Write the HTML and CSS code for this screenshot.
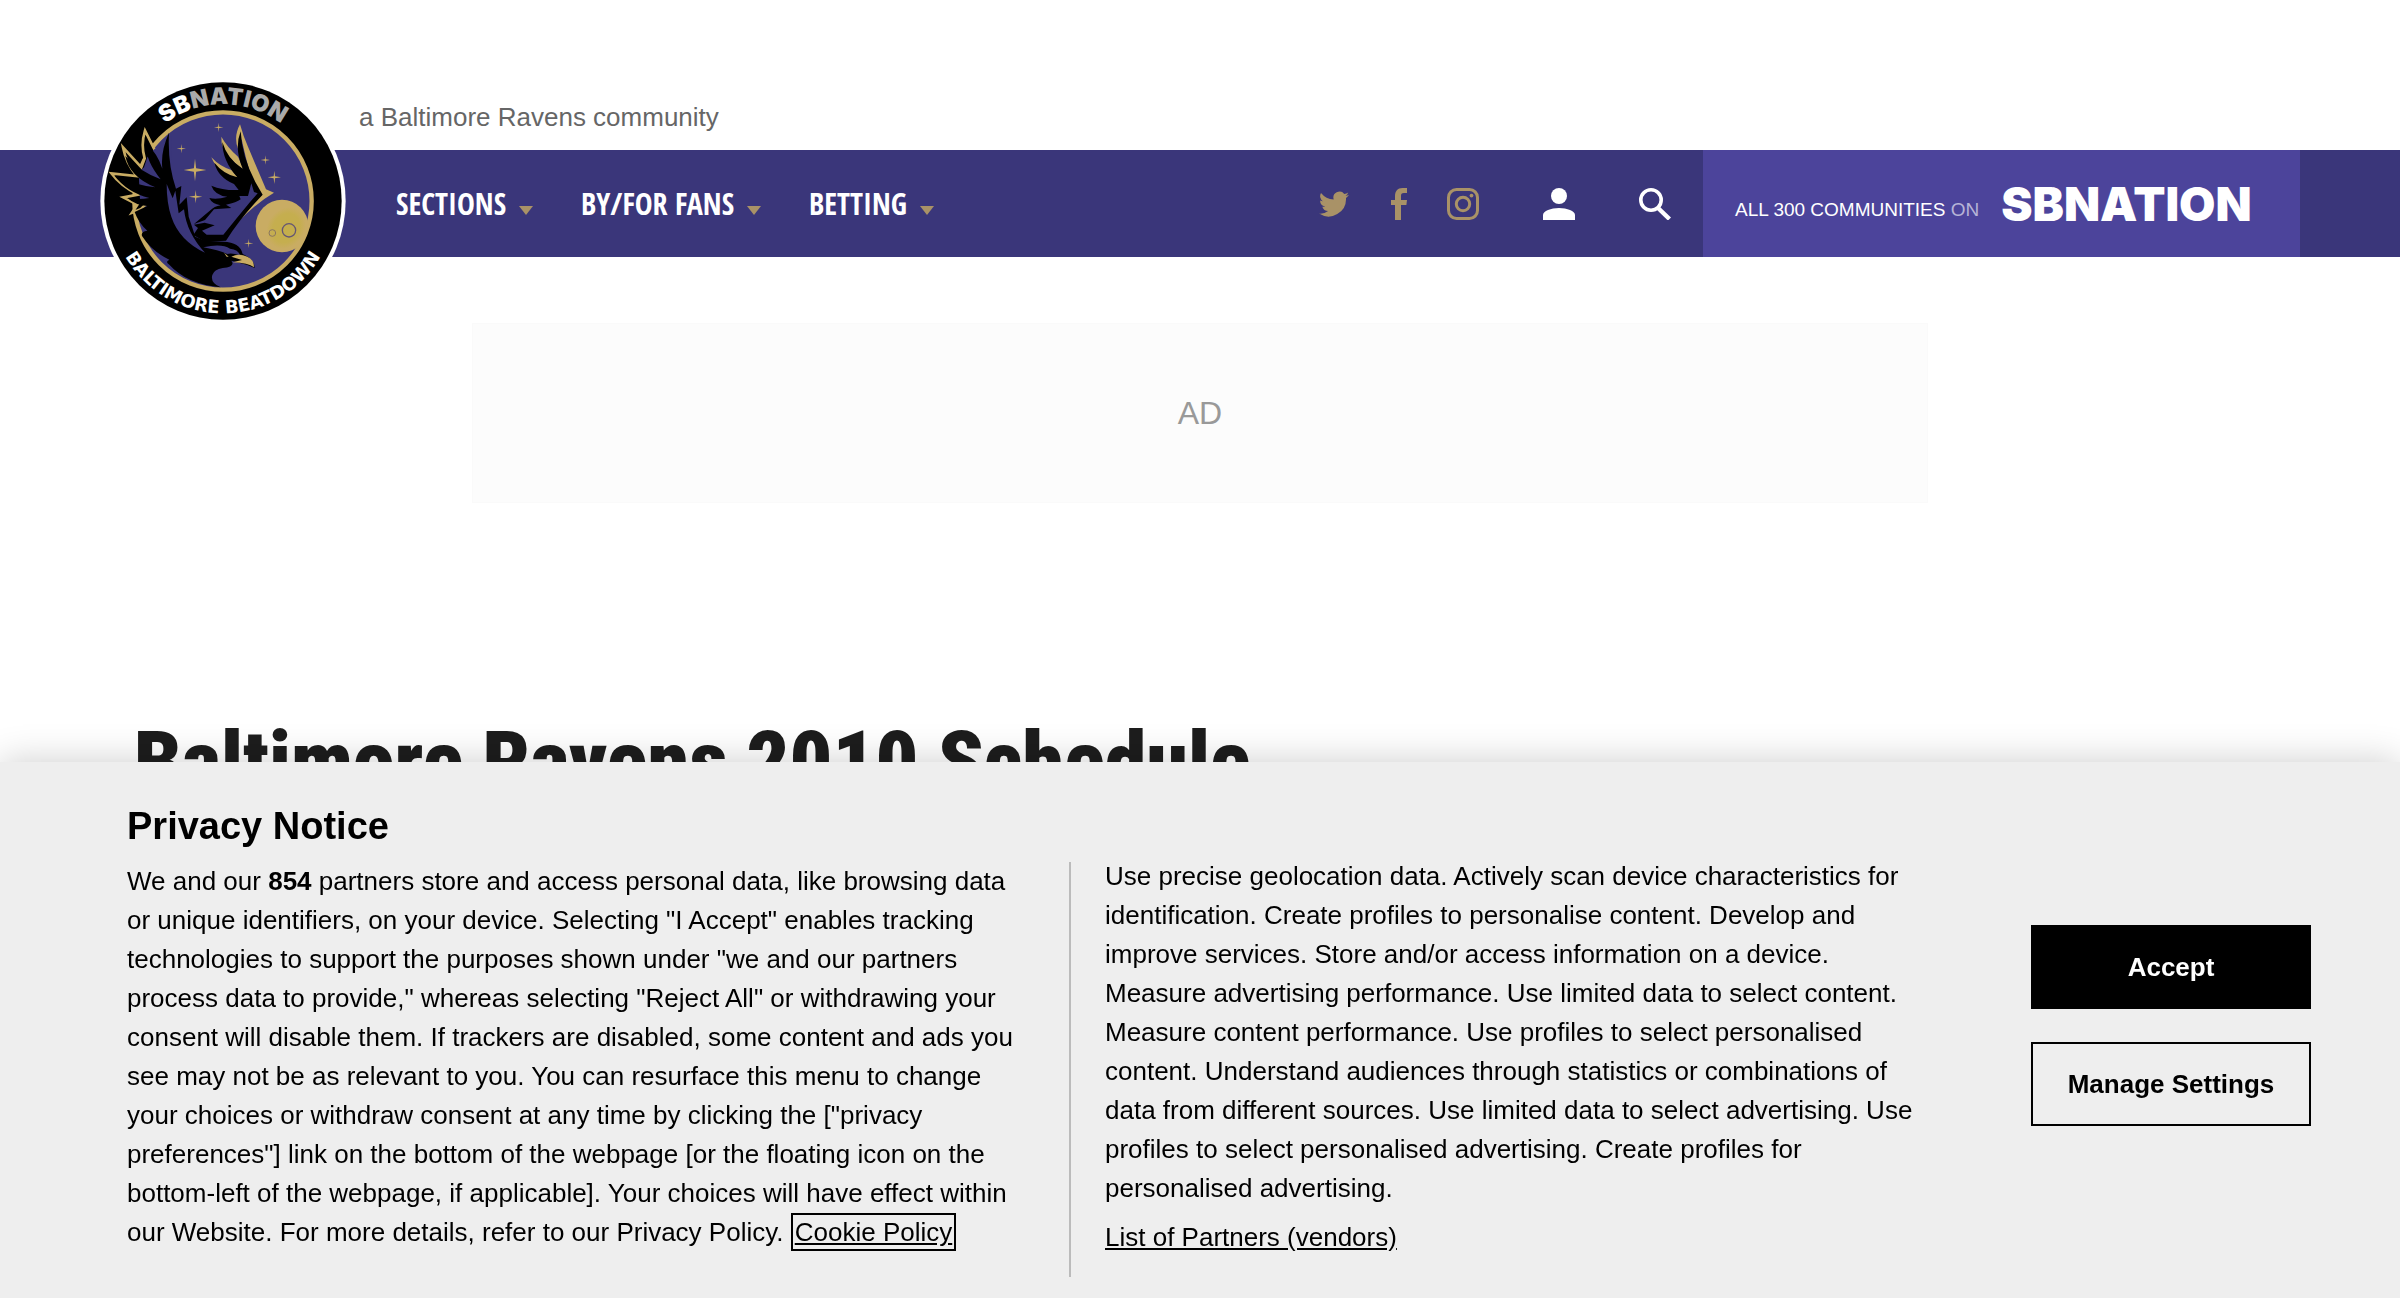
FILE: index.html
```html
<!DOCTYPE html>
<html lang="en">
<head>
<meta charset="utf-8">
<meta name="viewport" content="width=device-width, initial-scale=1">
<title>Baltimore Ravens 2010 Schedule - Baltimore Beatdown</title>
<link rel="stylesheet" href="styles.css">
</head>
<body>
<header class="header">
  <p class="tagline">a Baltimore Ravens community</p>
  <div class="bar">
    <a class="logo" href="#" aria-label="Baltimore Beatdown">
      <svg viewBox="30 24 738 738" aria-hidden="true">
        <defs>
          <path id="arc-top" d="M109 393a290 290 0 0 1 580 0"/>
          <path id="arc-bottom" d="M62 393a337 337 0 0 0 674 0"/>
          <path id="star" d="M0-20L2-3L20 0L2 3L0 20L-2 3L-20 0L-2-3Z"/>
          <radialGradient id="glow"><stop offset="0" stop-color="#c5ae4b"/><stop offset=".7" stop-color="#c5ae4f"/><stop offset="1" stop-color="#c9ac63"/></radialGradient>
        </defs>
        <circle cx="399" cy="393" r="368" fill="#fff"/>
        <circle cx="399" cy="393" r="356"/>
        <circle cx="399" cy="393" r="266" fill="#3a367a" stroke="#c9ac63" stroke-width="13"/>
        <!-- back of the raised wing, with its gold edge -->
        <path d="M192 236L165 182Q152 225 164 265L154 292L99 232Q108 280 140 318L64 310Q92 348 144 374L100 382L142 404L126 428L152 418L240 330Z" stroke="#c9ac63" stroke-width="8" stroke-linejoin="miter"/>
        <path d="M190 240L172 262L162 292L146 308L150 390L240 380L245 200Z" fill="#3a367a"/>
        <!-- raised wing, body and tail -->
        <path d="M237 188Q211 245 217 296Q202 250 168 220Q165 270 212 328Q150 305 106 258Q118 320 196 352Q130 345 72 316Q112 368 178 384Q145 390 112 384Q136 405 172 408L134 426Q146 460 172 482Q152 484 156 498Q186 545 238 569Q224 576 238 584Q290 642 392 652Q360 638 367 615Q372 598 398 594Q438 590 424 572L470 584L494 594Q494 568 458 552Q450 516 400 515L345 512L316 500L296 440L290 382L268 404L274 348L258 356Q232 280 237 188Z"/>
        <path d="M230 342L248 385L256 362L266 430L282 418Q290 490 345 548Q268 512 244 440Q230 400 230 342Z" fill="#3a367a"/>
        <path d="M340 532Q395 520 420 536Q445 538 450 556Q425 548 412 552Q385 540 340 532Z" fill="#3a367a"/>
        <!-- far wing: gold edge, then feathers -->
        <path d="M450 163Q460 200 474 230L528 358L552 368Q500 398 446 454Q468 412 516 375L492 345Q475 300 455 208Q447 218 444 236Q430 200 450 163Z" fill="#c9ac63"/>
        <path d="M394 200Q412 232 444 260L462 300Q425 275 400 236Q393 220 394 200Z" fill="#c9ac63"/>
        <path d="M364 262Q390 290 424 300L450 328Q415 318 390 300Q375 288 364 262Z" fill="#c9ac63"/>
        <path d="M452 184Q432 235 458 296Q412 268 397 216Q397 272 442 322Q400 312 373 278Q384 322 432 342L446 360Q400 362 364 347Q374 376 412 380Q380 390 358 384Q366 402 392 406Q372 410 362 420L312 462L345 450L372 418L424 414L408 404Q440 398 452 388L448 378L474 378L484 340L492 366L503 370L482 394Q440 445 400 494L350 494L336 482L374 466L344 458L312 464L324 474L310 495L345 515L408 512Q450 445 518 374L496 336Q456 260 452 184Z"/>
        <!-- beak and eye -->
        <path d="M424 560Q446 548 472 560Q492 568 492 592Q475 578 428 577L456 570Z" fill="#c9ac63"/>
        <path d="M402 548L416 560L410 560Z" fill="#c9ac63"/>
        <!-- moon -->
        <circle cx="576" cy="468" r="79" fill="#c9ac63"/>
        <ellipse cx="588" cy="474" rx="55" ry="66" transform="rotate(35 588 474)" fill="url(#glow)"/>
        <circle cx="597" cy="481" r="20" fill="none" stroke="#655674" stroke-width="4"/>
        <circle cx="547" cy="489" r="10" fill="none" stroke="#8a7660" stroke-width="3"/>
        <g fill="#c9ac63">
          <use href="#star" transform="translate(386 172) scale(.7)"/>
          <use href="#star" transform="translate(274 236) scale(.7)"/>
          <use href="#star" transform="translate(315 300) scale(1.7)"/>
          <use href="#star" transform="translate(317 380)"/>
          <use href="#star" transform="translate(526 270) scale(.7)"/>
          <use href="#star" transform="translate(553 322)"/>
          <use href="#star" transform="translate(476 520) scale(.7)"/>
        </g>
        <text class="logo-top"><textPath href="#arc-top" startOffset="50%">SB<tspan class="logo-gray">NATION</tspan></textPath></text>
        <text class="logo-bottom"><textPath href="#arc-bottom" startOffset="50%">BALTIMORE BEATDOWN</textPath></text>
      </svg>
    </a>
    <nav class="nav">
      <a class="nav-link" href="#">SECTIONS<span class="caret"></span></a>
      <a class="nav-link" href="#">BY/FOR FANS<span class="caret"></span></a>
      <a class="nav-link" href="#">BETTING<span class="caret"></span></a>
    </nav>
    <div class="tools">
      <div class="social">
        <a class="icon" href="#" aria-label="Twitter"><svg viewBox="0 0 32 32"><path d="M31 5.800a12 12 0 0 1-3.500 1 6.200 6.200 0 0 0 2.700-3.400 12 12 0 0 1-3.900 1.500 6.100 6.100 0 0 0-10.600 5.600A17.500 17.500 0 0 1 3 4a6.200 6.200 0 0 0 1.900 8.300 6 6 0 0 1-2.800-.8 6.200 6.200 0 0 0 5 6.100 6 6 0 0 1-2.800.1 6.200 6.200 0 0 0 5.800 4.300A12.400 12.400 0 0 1 1 24.600a17.500 17.500 0 0 0 27-15.600A12 12 0 0 0 31 5.800z" transform="translate(-1 1)"/></svg></a>
        <a class="icon" href="#" aria-label="Facebook"><svg viewBox="0 0 32 32"><path d="M12 32V17H8v-5h4V8.500C12 3 14.500 0 19.500 0H24v5h-3c-2.500 0-3 1-3 3v4h6l-.6 5H18v15z"/></svg></a>
        <a class="icon" href="#" aria-label="Instagram"><svg viewBox="0 0 32 32"><rect x="1.500" y="1.500" width="29" height="29" rx="8" fill="none" stroke="currentColor" stroke-width="3"/><circle cx="16" cy="16" r="6.700" fill="none" stroke="currentColor" stroke-width="3"/><circle cx="24.500" cy="7.600" r="1.900"/></svg></a>
      </div>
      <button class="icon" type="button" aria-label="Log in"><svg viewBox="0 0 32 32"><circle cx="16" cy="8" r="8"/><path d="M0 32v-5c0-4 8-7 16-7s16 3 16 7v5z"/></svg></button>
      <button class="icon" type="button" aria-label="Search"><svg viewBox="0 0 32 32"><circle cx="12" cy="12" r="10.200" fill="none" stroke="currentColor" stroke-width="3.600"/><path d="M18.500 19.500L30.500 31" stroke="currentColor" stroke-width="4.400"/></svg></button>
      <a class="network" href="#">
        <span>ALL 300 COMMUNITIES <span class="dim">ON</span></span>
        <strong class="wordmark">SBNATION</strong>
      </a>
    </div>
  </div>
</header>
<main class="main">
  <div class="ad">AD</div>
  <h1 class="title">Baltimore Ravens 2010 Schedule</h1>
</main>
<section class="notice" aria-labelledby="notice-title">
  <div class="copy">
    <h2 class="notice-title" id="notice-title">Privacy Notice</h2>
    <p class="text">We and our <b>854</b> partners store and access personal data, like browsing data or unique identifiers, on your device. Selecting "I Accept" enables tracking technologies to support the purposes shown under "we and our partners process data to provide," whereas selecting "Reject All" or withdrawing your consent will disable them. If trackers are disabled, some content and ads you see may not be as relevant to you. You can resurface this menu to change your choices or withdraw consent at any time by clicking the ["privacy preferences"] link on the bottom of the webpage [or the floating icon on the bottom-left of the webpage, if applicable]. Your choices will have effect within our Website. For more details, refer to our Privacy Policy. <a class="policy" href="#">Cookie Policy</a></p>
  </div>
  <div class="purposes">
    <p class="text">Use precise geolocation data. Actively scan device characteristics for identification. Create profiles to personalise content. Develop and improve services. Store and/or access information on a device. Measure advertising performance. Use limited data to select content. Measure content performance. Use profiles to select personalised content. Understand audiences through statistics or combinations of data from different sources. Use limited data to select advertising. Use profiles to select personalised advertising. Create profiles for personalised advertising.</p>
    <a class="vendors" href="#">List of Partners (vendors)</a>
  </div>
  <div class="actions">
    <button class="btn btn-solid" type="button">Accept</button>
    <button class="btn" type="button">Manage Settings</button>
  </div>
</section>
</body>
</html>
```

FILE: styles.css
```css
* {
  box-sizing: border-box;
}

body {
  margin: 0;
  background: #fff;
  color: #000;
  font-family: "Liberation Sans", Arial, sans-serif;
  font-size: 26px;
  line-height: 39px;
}

h1, h2, p {
  margin: 0;
}

a {
  color: inherit;
}

.tagline {
  padding: 98px 100px 13px 359px;
  color: #666;
}

.bar {
  position: relative;
  display: flex;
  justify-content: space-between;
  height: 107px;
  padding: 0 100px 0 396px;
  background: #3a367a;
  color: #fff;
}

.logo {
  position: absolute;
  left: 100px;
  top: -72px;
  width: 246px;
  height: 246px;
}

.logo svg {
  display: block;
  width: 100%;
  height: 100%;
}

.logo-top {
  fill: #fff;
  font: 900 70px Inter, sans-serif;
  text-anchor: middle;
}

.logo-gray {
  fill: #aaa;
}

.logo-bottom {
  fill: #fff;
  font: 700 54px "DejaVu Sans", sans-serif;
  text-anchor: middle;
}

.nav {
  display: flex;
  align-items: center;
  gap: 48px;
}

.nav-link {
  display: flex;
  align-items: center;
  gap: 13px;
  font-family: "Open Sans Condensed", "Roboto Condensed", sans-serif;
  font-size: 30px;
  font-weight: 700;
  text-decoration: none;
}

.caret {
  margin-top: 14px;
  border: 7px solid transparent;
  border-top: 9px solid #a99267;
  border-bottom: 0;
}

.tools {
  display: flex;
  align-items: center;
  gap: 64px;
}

.social {
  display: flex;
  gap: 32px;
  color: #a99267;
}

.icon {
  display: block;
  width: 32px;
  height: 32px;
  padding: 0;
  border: 0;
  background: none;
  color: inherit;
}

.icon svg {
  display: block;
  width: 32px;
  height: 32px;
  fill: currentColor;
}

.network {
  display: flex;
  align-items: center;
  gap: 22px;
  width: 597px;
  height: 100%;
  margin-left: -32px;
  padding-left: 32px;
  background: #4c449b;
  font-size: 19px;
  text-decoration: none;
  white-space: nowrap;
}

.network > span {
  padding-top: 12px;
}

.dim {
  color: #b7b4d7;
}

.wordmark {
  font-family: Inter, sans-serif;
  font-size: 47px;
  font-weight: 900;
}

.main {
  padding: 66px 134px 0;
}

.ad {
  display: flex;
  align-items: center;
  justify-content: center;
  max-width: 1456px;
  height: 180px;
  margin: 0 auto;
  border: 1px solid #fafafa;
  background: #fcfcfc;
  color: #999;
  font-size: 32px;
}

.title {
  padding-top: 213px;
  color: #1d1d1d;
  font-family: "Roboto Condensed", "Open Sans Condensed", sans-serif;
  font-size: 84px;
  font-weight: 900;
  line-height: 92px;
}

.notice {
  position: fixed;
  right: 0;
  bottom: 0;
  left: 0;
  display: grid;
  grid-template-columns: 893fr 913fr 280px;
  column-gap: 49px;
  align-items: start;
  padding: 42px 89px 21px 127px;
  background: #eee;
  box-shadow: 0 0 36px rgba(0, 0, 0, .2);
}

.notice-title {
  font-size: 38px;
  line-height: 44px;
}

.copy .text {
  padding-top: 14px;
}

.policy {
  margin-left: 4px;
  outline: 2px solid #000;
  outline-offset: 2px;
}

.purposes {
  min-height: 415px;
  margin-top: 58px;
  padding: 0 62px 0 34px;
  border-left: 2px solid #bbb;
}

.purposes .text {
  margin-top: -5px;
  padding-bottom: 10px;
}

.actions {
  display: grid;
  gap: 33px;
  align-self: center;
  padding-bottom: 30px;
}

.btn {
  height: 84px;
  border: 2px solid #000;
  background: transparent;
  color: #000;
  font: inherit;
  font-weight: 700;
}

.btn-solid {
  background: #000;
  color: #fff;
}
```
